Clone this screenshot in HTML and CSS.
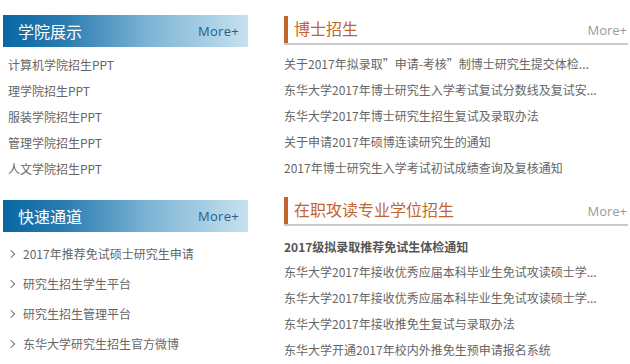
FILE: index.html
```html
<!DOCTYPE html>
<html lang="zh-CN">
<head>
  <meta charset="UTF-8" />
  <title>研究生招生</title>
  <link rel="stylesheet" href="styles.css">
</head>
<body>
  <div class="page">
    <div class="side">
      <div class="box">
        <div class="box-head">
          <h2>学院展示</h2>
          <a class="more" href="#">More+</a>
        </div>
        <ul class="plain-list">
          <li><a href="#">计算机学院招生PPT</a></li>
          <li><a href="#">理学院招生PPT</a></li>
          <li><a href="#">服装学院招生PPT</a></li>
          <li><a href="#">管理学院招生PPT</a></li>
          <li><a href="#">人文学院招生PPT</a></li>
        </ul>
      </div>
      <div class="box">
        <div class="box-head">
          <h2>快速通道</h2>
          <a class="more" href="#">More+</a>
        </div>
        <ul class="arrow-list">
          <li><a href="#">2017年推荐免试硕士研究生申请</a></li>
          <li><a href="#">研究生招生学生平台</a></li>
          <li><a href="#">研究生招生管理平台</a></li>
          <li><a href="#">东华大学研究生招生官方微博</a></li>
        </ul>
      </div>
    </div>

    <div class="main">
      <div class="news">
        <div class="news-head">
          <h2>博士招生</h2>
          <a class="more" href="#">More+</a>
        </div>
        <ul class="news-list">
          <li><a href="#">关于2017年拟录取”申请-考核”制博士研究生提交体检...</a></li>
          <li><a href="#">东华大学2017年博士研究生入学考试复试分数线及复试安...</a></li>
          <li><a href="#">东华大学2017年博士研究生招生复试及录取办法</a></li>
          <li><a href="#">关于申请2017年硕博连读研究生的通知</a></li>
          <li><a href="#">2017年博士研究生入学考试初试成绩查询及复核通知</a></li>
        </ul>
      </div>
      <div class="news">
        <div class="news-head">
          <h2>在职攻读专业学位招生</h2>
          <a class="more" href="#">More+</a>
        </div>
        <ul class="news-list">
          <li class="top"><a href="#">2017级拟录取推荐免试生体检通知</a></li>
          <li><a href="#">东华大学2017年接收优秀应届本科毕业生免试攻读硕士学...</a></li>
          <li><a href="#">东华大学2017年接收优秀应届本科毕业生免试攻读硕士学...</a></li>
          <li><a href="#">东华大学2017年接收推免生复试与录取办法</a></li>
          <li><a href="#">东华大学开通2017年校内外推免生预申请报名系统</a></li>
        </ul>
      </div>
    </div>
  </div>
</body>
</html>
```

FILE: styles.css
```css
* {
  box-sizing: border-box;
  margin: 0;
  padding: 0;
}

body {
  font-family: 'Noto Sans CJK SC', 'Noto Sans', sans-serif;
  background: #fff;
  color: #666;
  font-size: 12px;
}

a {
  color: inherit;
  text-decoration: none;
}

ul {
  list-style: none;
}

.page {
  display: flex;
  gap: 36px;
  padding: 15px 2px 0 3px;
}

/* left column */
.side {
  width: 245px;
  flex-shrink: 0;
}

.box + .box {
  margin-top: 18px;
}

.box-head {
  height: 32px;
  display: flex;
  align-items: center;
  justify-content: space-between;
  padding: 0 9px 0 15px;
  background: linear-gradient(to right, #0868a2 0%, #2a7cb0 25%, #7eb5d5 60%, #c6e1ef 100%);
}

.box-head h2 {
  font-size: 16px;
  font-weight: normal;
  color: #fff;
}

.box-head .more {
  font-family: 'Open Sans', 'Liberation Sans', sans-serif;
  font-size: 13px;
  color: #1f5f8e;
  letter-spacing: 0.3px;
}

.plain-list {
  padding: 5px 0 0 5px;
}

.plain-list li {
  line-height: 26px;
}

.arrow-list {
  padding: 7px 0 0 5px;
}

.arrow-list li {
  line-height: 30px;
  display: flex;
  align-items: center;
}

.arrow-list li::before {
  content: '';
  width: 5px;
  height: 5px;
  border-top: 1px solid #777;
  border-right: 1px solid #777;
  transform: rotate(45deg);
  margin: 0 9px 0 0;
}

/* right column */
.main {
  width: 344px;
  flex-shrink: 0;
}

.news + .news {
  margin-top: 15px;
}

.news-head {
  height: 30px;
  display: flex;
  align-items: flex-end;
  justify-content: space-between;
  border-bottom: 2px solid #cacaca;
  padding-top: 2px;
}

.news-head h2 {
  height: 27px;
  line-height: 25px;
  font-size: 16px;
  font-weight: normal;
  color: #c3652c;
  border-left: 4px solid #c0652b;
  padding-left: 6px;
}

.news-head .more {
  font-family: 'Open Sans', 'Liberation Sans', sans-serif;
  font-size: 13px;
  color: #9a9a9a;
  line-height: 26px;
  align-self: flex-start;
  margin-right: 1px;
}

.news-list {
  padding-top: 6px;
}

.news-list li {
  line-height: 26px;
  white-space: nowrap;
}

.news-list li.top {
  font-weight: bold;
  color: #555;
  line-height: 25px;
  padding-top: 2px;
}
```
